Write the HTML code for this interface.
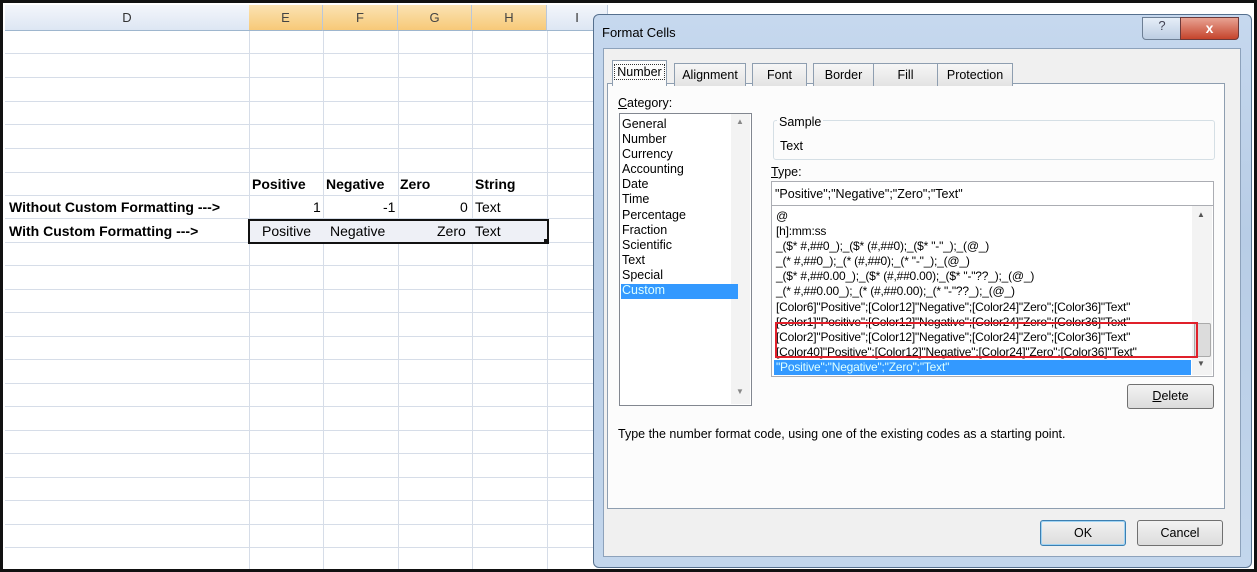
<!DOCTYPE html>
<html><head><meta charset="utf-8"><style>
body{margin:0;width:1257px;height:572px;overflow:hidden;background:#fff;font-family:"Liberation Sans",sans-serif;}
#wrap{position:absolute;left:0;top:0;width:1251px;height:566px;border:3px solid #111;background:#fff;overflow:hidden}
.a{position:absolute}
.hd{position:absolute;top:2px;height:25px;background:linear-gradient(#f3f6fb,#dde6f3);border-right:1px solid #b9c7da;border-bottom:1px solid #9eb6ce;font-size:13px;color:#333;text-align:center;line-height:25px}
.hd.s{background:linear-gradient(#fbe3b3,#f7c978);color:#444}
.hl{position:absolute;left:2px;width:590px;height:1px;background:#d6dde8}
.vl{position:absolute;top:28px;width:1px;height:540px;background:#d6dde8}
.c{position:absolute;font-size:14px;color:#000;white-space:nowrap}
.b{font-weight:bold}
.dl{font-size:12.5px;color:#000;white-space:nowrap}
.btn{position:absolute;border:1px solid #707070;border-radius:3px;background:linear-gradient(#f2f2f2,#dcdcdc);font-size:12.5px;text-align:center}
.tab{position:absolute;top:60px;height:22px;border:1px solid #8e9eb0;border-bottom:none;background:linear-gradient(#f6f6f6,#e3e3e3);font-size:12.5px;text-align:center;line-height:22px}
</style></head><body><div id="wrap">
<div class="hd" style="left:2px;width:244px">D</div>
<div class="hd s" style="left:246px;width:73px">E</div>
<div class="hd s" style="left:320px;width:74px">F</div>
<div class="hd s" style="left:395px;width:73px">G</div>
<div class="hd s" style="left:469px;width:74px">H</div>
<div class="hd" style="left:544px;width:60px">I</div>
<div class="vl" style="left:246px"></div><div class="vl" style="left:320px"></div><div class="vl" style="left:395px"></div><div class="vl" style="left:469px"></div><div class="vl" style="left:544px"></div>
<div class="hl" style="top:50px"></div><div class="hl" style="top:74px"></div><div class="hl" style="top:98px"></div><div class="hl" style="top:121px"></div><div class="hl" style="top:145px"></div><div class="hl" style="top:169px"></div><div class="hl" style="top:192px"></div><div class="hl" style="top:215px"></div><div class="hl" style="top:239px"></div><div class="hl" style="top:262px"></div><div class="hl" style="top:286px"></div><div class="hl" style="top:309px"></div><div class="hl" style="top:333px"></div><div class="hl" style="top:356px"></div><div class="hl" style="top:380px"></div><div class="hl" style="top:403px"></div><div class="hl" style="top:427px"></div><div class="hl" style="top:450px"></div><div class="hl" style="top:474px"></div><div class="hl" style="top:497px"></div><div class="hl" style="top:521px"></div><div class="hl" style="top:544px"></div>
<div class="c b" style="left:249px;top:173px">Positive</div>
<div class="c b" style="left:323px;top:173px">Negative</div>
<div class="c b" style="left:397px;top:173px">Zero</div>
<div class="c b" style="left:472px;top:173px">String</div>
<div class="c b" style="left:6px;top:196px">Without Custom Formatting ---&gt;</div>
<div class="c" style="left:310px;top:196px">1</div>
<div class="c" style="left:380px;top:196px">-1</div>
<div class="c" style="left:457px;top:196px">0</div>
<div class="c" style="left:472px;top:196px">Text</div>
<div class="c b" style="left:6px;top:220px">With Custom Formatting ---&gt;</div>
<div class="a" style="left:245px;top:216px;width:297px;height:21px;border:2px solid #111;background:#eef0f6"></div>
<div class="a" style="left:541px;top:236px;width:5px;height:5px;background:#111"></div>
<div class="c" style="left:259px;top:220px">Positive</div>
<div class="c" style="left:327px;top:220px">Negative</div>
<div class="c" style="left:434px;top:220px">Zero</div>
<div class="c" style="left:472px;top:220px">Text</div>

<!-- dialog -->
<div class="a" style="left:590px;top:11px;width:657px;height:552px;border:1px solid #56708e;border-radius:6px;background:linear-gradient(#c6d8ee,#b8cde6 40%,#c3d6ec)"></div>
<div class="a dl" style="left:599px;top:22px;font-size:13px">Format Cells</div>
<div class="a" style="left:1139px;top:14px;width:38px;height:21px;border:1px solid #6d7f95;border-radius:0 0 0 4px;background:linear-gradient(#e6eef8,#bccde2);text-align:center;font-size:13px;color:#445">?</div>
<div class="a" style="left:1177px;top:14px;width:57px;height:21px;border:1px solid #6d3a3a;border-radius:0 0 4px 0;background:linear-gradient(#e8a393,#c5442c);text-align:center;font-size:14px;font-weight:bold;color:#fff;line-height:20px">x</div>
<div class="a" style="left:600px;top:45px;width:636px;height:507px;border:1px solid #8da2bb;background:#f0f0f0"></div>
<div class="a" style="left:604px;top:80px;width:616px;height:424px;border:1px solid #8e9eb0;background:#fcfcfc"></div>
<div class="tab" style="left:609px;top:57px;height:25px;width:53px;background:#fcfcfc;z-index:2"><span style="border:1px dotted #333;padding:0 2px">Number</span></div>
<div class="tab" style="left:671px;width:70px">Alignment</div>
<div class="tab" style="left:749px;width:53px">Font</div>
<div class="tab" style="left:810px;width:59px">Border</div>
<div class="tab" style="left:870px;width:63px">Fill</div>
<div class="tab" style="left:934px;width:74px">Protection</div>
<div class="a dl" style="left:615px;top:93px"><u>C</u>ategory:</div>
<div class="a" style="left:616px;top:110px;width:131px;height:291px;border:1px solid #828790;background:#fff"></div>
<div class="a" style="left:728px;top:111px;width:19px;height:290px;background:#f3f3f3"></div>
<div class="a" style="left:733px;top:114px;font-size:8px;color:#888">▲</div>
<div class="a" style="left:733px;top:384px;font-size:8px;color:#888">▼</div>
<div class="a" style="left:618px;top:281px;width:117px;height:15px;background:#3399ff"></div>
<div class="a dl" style="left:619px;top:114px;line-height:15.1px">General<br>Number<br>Currency<br>Accounting<br>Date<br>Time<br>Percentage<br>Fraction<br>Scientific<br>Text<br>Special<br><span style="color:#dff">Custom</span></div>
<div class="a" style="left:770px;top:117px;width:440px;height:38px;border:1px solid #d5dfe5;border-radius:3px"></div>
<div class="a dl" style="left:774px;top:112px;background:#fcfcfc;padding:0 2px">Sample</div>
<div class="a dl" style="left:777px;top:136px">Text</div>
<div class="a dl" style="left:768px;top:162px"><u>T</u>ype:</div>
<div class="a" style="left:768px;top:178px;width:441px;height:23px;border:1px solid #abadb3;background:#fff"></div>
<div class="a dl" style="left:772px;top:184px">"Positive";"Negative";"Zero";"Text"</div>
<div class="a" style="left:768px;top:202px;width:441px;height:170px;border:1px solid #abadb3;background:#fff"></div>
<div class="a" style="left:1189px;top:203px;width:20px;height:169px;background:#f3f3f3"></div>
<div class="a" style="left:1191px;top:320px;width:15px;height:32px;background:#dcdcdc;border:1px solid #aaa;border-radius:2px"></div>
<div class="a" style="left:1194px;top:207px;font-size:8px;color:#555">▲</div>
<div class="a" style="left:1194px;top:356px;font-size:8px;color:#555">▼</div>
<div class="a" style="left:771px;top:357px;width:417px;height:15px;background:#3399ff"></div>
<div class="a dl" style="left:773px;top:206px;line-height:15.1px;font-size:12px;letter-spacing:-0.2px">@<br>[h]:mm:ss<br>_($* #,##0_);_($* (#,##0);_($* "-"_);_(@_)<br>_(* #,##0_);_(* (#,##0);_(* "-"_);_(@_)<br>_($* #,##0.00_);_($* (#,##0.00);_($* "-"??_);_(@_)<br>_(* #,##0.00_);_(* (#,##0.00);_(* "-"??_);_(@_)<br>[Color6]"Positive";[Color12]"Negative";[Color24]"Zero";[Color36]"Text"<br>[Color1]"Positive";[Color12]"Negative";[Color24]"Zero";[Color36]"Text"<br>[Color2]"Positive";[Color12]"Negative";[Color24]"Zero";[Color36]"Text"<br>[Color40]"Positive";[Color12]"Negative";[Color24]"Zero";[Color36]"Text"<br><span style="color:#dff">"Positive";"Negative";"Zero";"Text"</span></div>
<div class="a" style="left:772px;top:319px;width:419px;height:32px;border:2px solid #e0202a"></div>
<div class="btn" style="left:1124px;top:381px;width:85px;height:23px;line-height:23px"><u>D</u>elete</div>
<div class="a dl" style="left:615px;top:424px">Type the number format code, using one of the existing codes as a starting point.</div>
<div class="btn" style="left:1037px;top:517px;width:84px;height:24px;line-height:24px;border-color:#3c7fb1;box-shadow:inset 0 0 0 1px #9fd3f3">OK</div>
<div class="btn" style="left:1134px;top:517px;width:84px;height:24px;line-height:24px">Cancel</div>
</div></body></html>
